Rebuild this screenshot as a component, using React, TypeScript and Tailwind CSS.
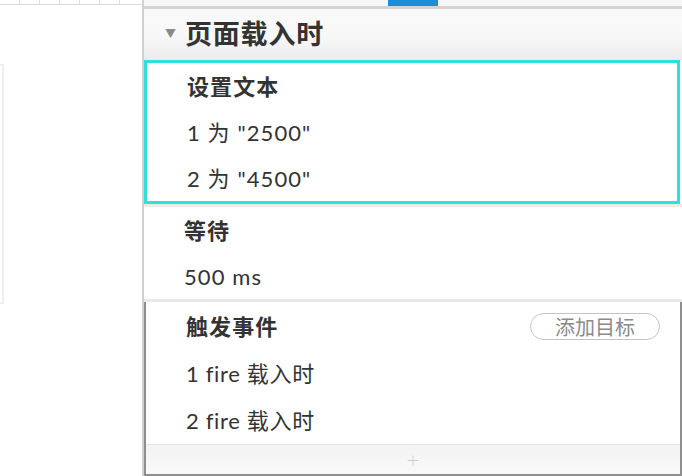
import React from 'react';

const font = { fontFamily: 'Lato, "Noto Sans CJK SC", sans-serif' };

const ticks = [25, 45, 65, 85, 106, 126];

const Line = ({ children, bold }: { children: React.ReactNode; bold?: boolean }) => (
  <div className={`flex items-center h-[46px] pl-[40px] text-[22px] tracking-[0.05em] text-[#333] ${bold ? 'font-bold' : ''}`}>
    {children}
  </div>
);

export default function App() {
  return (
    <div className="flex w-[682px] h-[476px] overflow-hidden bg-white" style={font}>
      {/* left canvas */}
      <div className="w-[142px] flex flex-col">
        <div className="h-[5px] border-b border-[#dcdcdc] flex">
          {ticks.map((t, i) => (
            <div key={i} className="w-[20px] h-full border-r border-[#dcdcdc]" />
          ))}
        </div>
        <div className="mt-[59px] w-[4px] h-[240px] border-y-2 border-r-2 border-[#efefef]" />
      </div>
      <div className="w-[2px] bg-[#d2d2d2]" />

      {/* panel */}
      <div className="flex-1 flex flex-col">
        <div className="h-[6px] bg-[#f7f7f7] flex">
          <div className="ml-[244px] w-[50px] bg-[#1a8ddb]" />
        </div>
        <div className="h-[3px] bg-[#d4d4d4]" />
        <div className="h-[51px] flex items-center bg-gradient-to-b from-[#f9f9f9] via-[#f8f8f8] to-[#ececec]">
          <span className="ml-[21px] text-[11px] text-[#8a8a8a]">▼</span>
          <span className="ml-[9px] text-[27px] font-bold text-[#333] tracking-[0.03em]">页面载入时</span>
        </div>

        <div className="mr-[2px] border-[3px] border-[#2be1da] bg-white">
          <Line bold>设置文本</Line>
          <Line>1 为 "2500"</Line>
          <Line>2 为 "4500"</Line>
        </div>
        <div className="h-[3px] bg-[#ebebeb]" />

        <div className="bg-white border-b-[3px] border-[#e9e9e9]">
          <Line bold>等待</Line>
          <Line>500 ms</Line>
        </div>

        <div className="flex-1 flex flex-col border-x-2 border-b-2 border-[#8f8f8f]">
          <div className="pt-[1px]">
            <div className="flex items-center justify-between h-[47px] pl-[40px] pr-[20px]">
              <span className="text-[22px] tracking-[0.05em] font-bold text-[#333]">触发事件</span>
              <button className="w-[130px] h-[27px] rounded-full border-[1.5px] border-[#c4c4c4] text-[20px] text-[#8a8a8a] leading-none">
                添加目标
              </button>
            </div>
            <div className="flex items-center h-[47px] pl-[40px] text-[22px] tracking-[0.03em] text-[#333]">1 fire 载入时</div>
            <div className="flex items-center h-[47px] pl-[40px] text-[22px] tracking-[0.03em] text-[#333]">2 fire 载入时</div>
          </div>
          <div className="flex-1 flex items-center justify-center border-t border-[#e4e4e4] bg-gradient-to-b from-[#f3f3f3] to-[#f9f9f9] text-[22px] leading-none text-[#cfcfcf] font-light">
            +
          </div>
        </div>
      </div>
    </div>
  );
}
